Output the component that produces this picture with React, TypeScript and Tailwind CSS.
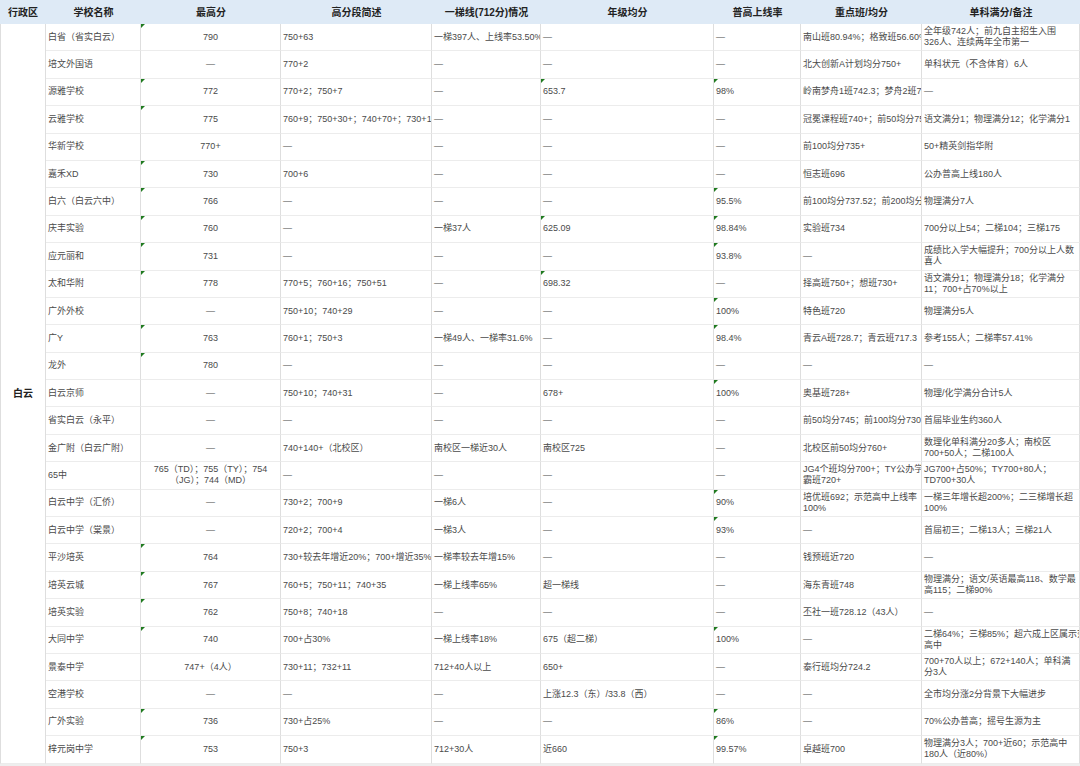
import React from 'react';

interface Row {
    name: string
    max: string
    maxTri?: boolean
    high: string
    yiti: string
    avg: string
    avgTri?: boolean
    rate: string
    rateTri?: boolean
    key: string
    note: string
}

const D = '—'

const rows: Row[] = [
    { name: '白省（省实白云）', max: '790', maxTri: true, high: '750+63', yiti: '一梯397人、上线率53.50%', avg: D, rate: D, key: '南山班80.94%；格致班56.60%', note: '全年级742人；前九自主招生入围\n326人、连续两年全市第一' },
    { name: '培文外国语', max: D, high: '770+2', yiti: D, avg: D, rate: D, key: '北大创新A计划均分750+', note: '单科状元（不含体育）6人' },
    { name: '源雅学校', max: '772', maxTri: true, high: '770+2；750+7', yiti: D, avg: '653.7', avgTri: true, rate: '98%', rateTri: true, key: '岭南梦舟1班742.3；梦舟2班723', note: D },
    { name: '云雅学校', max: '775', maxTri: true, high: '760+9；750+30+；740+70+；730+1', yiti: D, avg: D, rate: D, key: '冠冕课程班740+；前50均分751', note: '语文满分1；物理满分12；化学满分1' },
    { name: '华新学校', max: '770+', high: D, yiti: D, avg: D, rate: D, key: '前100均分735+', note: '50+精英剑指华附' },
    { name: '嘉禾XD', max: '730', maxTri: true, high: '700+6', yiti: D, avg: D, rate: D, key: '恒志班696', note: '公办普高上线180人' },
    { name: '白六（白云六中）', max: '766', maxTri: true, high: D, yiti: D, avg: D, rate: '95.5%', rateTri: true, key: '前100均分737.52；前200均分', note: '物理满分7人' },
    { name: '庆丰实验', max: '760', maxTri: true, high: D, yiti: '一梯37人', avg: '625.09', avgTri: true, rate: '98.84%', rateTri: true, key: '实验班734', note: '700分以上54；二梯104；三梯175' },
    { name: '应元丽和', max: '731', maxTri: true, high: D, yiti: D, avg: D, rate: '93.8%', rateTri: true, key: D, note: '成绩比入学大幅提升；700分以上人数\n喜人' },
    { name: '太和华附', max: '778', maxTri: true, high: '770+5；760+16；750+51', yiti: D, avg: '698.32', avgTri: true, rate: D, key: '择高班750+；想班730+', note: '语文满分1；物理满分18；化学满分\n11；700+占70%以上' },
    { name: '广外外校', max: D, high: '750+10；740+29', yiti: D, avg: D, rate: '100%', rateTri: true, key: '特色班720', note: '物理满分5人' },
    { name: '广Y', max: '763', maxTri: true, high: '760+1；750+3', yiti: '一梯49人、一梯率31.6%', avg: D, rate: '98.4%', rateTri: true, key: '青云A班728.7；青云班717.3', note: '参考155人；二梯率57.41%' },
    { name: '龙外', max: '780', maxTri: true, high: D, yiti: D, avg: D, rate: D, key: D, note: D },
    { name: '白云京师', max: D, high: '750+10；740+31', yiti: D, avg: '678+', rate: '100%', rateTri: true, key: '奥基班728+', note: '物理/化学满分合计5人' },
    { name: '省实白云（永平）', max: D, high: D, yiti: D, avg: D, rate: D, key: '前50均分745；前100均分730', note: '首届毕业生约360人' },
    { name: '金广附（白云广附）', max: D, high: '740+140+（北校区）', yiti: '南校区一梯近30人', avg: '南校区725', rate: D, key: '北校区前50均分760+', note: '数理化单科满分20多人；南校区\n700+50人；二梯100人' },
    { name: '65中', max: '765（TD）；755（TY）；754\n（JG）；744（MD）', high: D, yiti: D, avg: D, rate: D, key: 'JG4个班均分700+；TY公办学\n霸班720+', note: 'JG700+占50%；TY700+80人；\nTD700+30人' },
    { name: '白云中学（汇侨）', max: D, high: '730+2；700+9', yiti: '一梯6人', avg: D, rate: '90%', rateTri: true, key: '培优班692；示范高中上线率\n100%', note: '一梯三年增长超200%；二三梯增长超\n100%' },
    { name: '白云中学（棠景）', max: D, high: '720+2；700+4', yiti: '一梯3人', avg: D, rate: '93%', rateTri: true, key: D, note: '首届初三；二梯13人；三梯21人' },
    { name: '平沙培英', max: '764', maxTri: true, high: '730+较去年增近20%；700+增近35%', yiti: '一梯率较去年增15%', avg: D, rate: D, key: '钱预班近720', note: D },
    { name: '培英云城', max: '767', maxTri: true, high: '760+5；750+11；740+35', yiti: '一梯上线率65%', avg: '超一梯线', rate: D, key: '海东青班748', note: '物理满分；语文/英语最高118、数学最\n高115；二梯90%' },
    { name: '培英实验', max: '762', maxTri: true, high: '750+8；740+18', yiti: D, avg: D, rate: D, key: '丕社一班728.12（43人）', note: D },
    { name: '大同中学', max: '740', maxTri: true, high: '700+占30%', yiti: '一梯上线率18%', avg: '675（超二梯）', rate: '100%', rateTri: true, key: D, note: '二梯64%；三梯85%；超六成上区属示范\n高中' },
    { name: '景泰中学', max: '747+（4人）', high: '730+11；732+11', yiti: '712+40人以上', avg: '650+', rate: D, key: '泰行班均分724.2', note: '700+70人以上；672+140人；单科满\n分3人' },
    { name: '空港学校', max: D, high: D, yiti: D, avg: '上涨12.3（东）/33.8（西）', rate: D, key: D, note: '全市均分涨2分背景下大幅进步' },
    { name: '广外实验', max: '736', maxTri: true, high: '730+占25%', yiti: D, avg: D, rate: '86%', rateTri: true, key: D, note: '70%公办普高；摇号生源为主' },
    { name: '梓元岗中学', max: '753', maxTri: true, high: '750+3', yiti: '712+30人', avg: '近660', rate: '99.57%', rateTri: true, key: '卓越班700', note: '物理满分3人；700+近60；示范高中\n180人（近80%）' },
]

const headers = ['行政区', '学校名称', '最高分', '高分段简述', '一梯线(712分)情况', '年级均分', '普高上线率', '重点班/均分', '单科满分/备注']

const Tri = () => (
    <span className="absolute top-0 left-0 w-0 h-0 border-t-[4px] border-r-[4px] border-t-[#1f7a1f] border-r-transparent" />
)

const Cell = ({ text, tri, center }: { text: string, tri?: boolean, center?: boolean }) => (
    <div className={`relative flex items-center overflow-hidden border-r border-b border-r-[#dedede] border-b-[#ececec] px-[2px] whitespace-pre leading-[11px] ${center ? 'justify-center text-center' : ''}`}>
        {tri ? <Tri /> : null}
        {text}
    </div>
)

export default function App() {
    return (
        <div className="min-h-screen w-[1080px] bg-[#eeeeee] font-['Liberation_Sans','Noto_Sans_CJK_SC',sans-serif]">
            <div className="grid grid-cols-[46px_95px_140px_151px_109px_173px_87px_121px_158px] grid-rows-[24px_repeat(27,27.4px)] bg-white text-[9px] text-[#4a4a4a]">
                {headers.map((h) => (
                    <div key={h} className="flex items-center justify-center bg-[#deeaf6] text-[10px] font-bold text-[#222] whitespace-nowrap">
                        {h}
                    </div>
                ))}
                <div className="row-[span_27/span_27] flex items-center justify-center border-l border-r border-b border-l-[#dedede] border-r-[#dedede] border-b-[#ececec] text-[10px] font-bold text-[#222]">
                    白云
                </div>
                {rows.map((r) => (
                    <React.Fragment key={r.name}>
                        <Cell text={r.name} />
                        <Cell text={r.max} tri={r.maxTri} center />
                        <Cell text={r.high} />
                        <Cell text={r.yiti} />
                        <Cell text={r.avg} tri={r.avgTri} />
                        <Cell text={r.rate} tri={r.rateTri} />
                        <Cell text={r.key} />
                        <Cell text={r.note} />
                    </React.Fragment>
                ))}
            </div>
        </div>
    );
}
